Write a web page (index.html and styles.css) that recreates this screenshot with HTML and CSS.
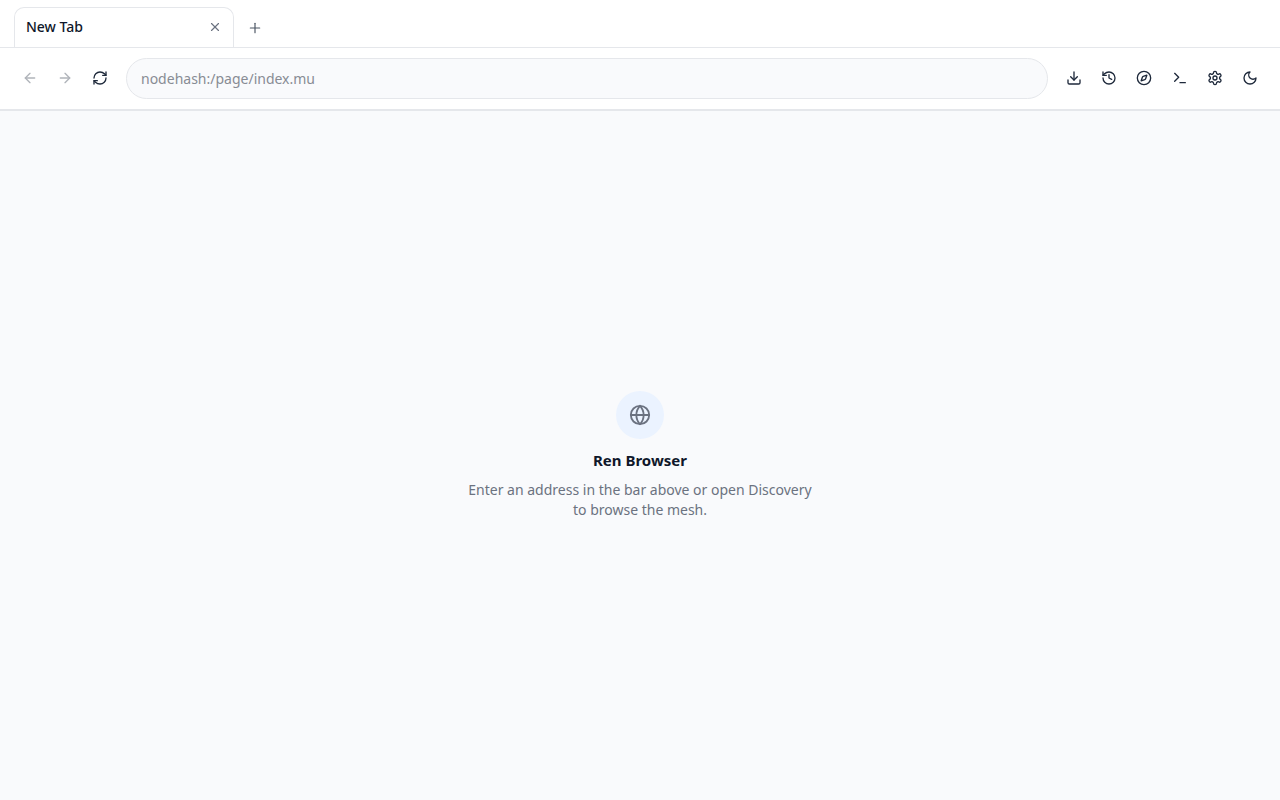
FILE: index.html
```
<!DOCTYPE html>
<html lang="en">
<head>
  <meta charset="UTF-8">
  <meta name="viewport" content="width=device-width, initial-scale=1.0">
  <title>Ren Browser</title>
  <link rel="stylesheet" href="styles.css">
</head>
<body>
  <div class="tab-bar">
    <div class="tab">
      <span class="tab-title">New Tab</span>
      <button type="button" class="tab-close" aria-label="Close tab">
        <svg viewBox="0 0 24 24"><path d="M18 6 6 18"/><path d="m6 6 12 12"/></svg>
      </button>
    </div>
    <button type="button" class="tab-new" aria-label="New tab">
      <svg viewBox="0 0 24 24"><path d="M4 12h16"/><path d="M12 4v16"/></svg>
    </button>
  </div>

  <header class="toolbar">
    <nav class="nav-buttons">
      <button type="button" class="icon-btn" aria-label="Back" disabled>
        <svg viewBox="0 0 24 24"><path d="m12 19-7-7 7-7"/><path d="M19 12H5"/></svg>
      </button>
      <button type="button" class="icon-btn" aria-label="Forward" disabled>
        <svg viewBox="0 0 24 24"><path d="M5 12h14"/><path d="m12 5 7 7-7 7"/></svg>
      </button>
      <button type="button" class="icon-btn" aria-label="Reload">
        <svg viewBox="0 0 24 24"><path d="M3 12a9 9 0 0 1 9-9 9.75 9.75 0 0 1 6.74 2.74L21 8"/><path d="M21 3v5h-5"/><path d="M21 12a9 9 0 0 1-9 9 9.75 9.75 0 0 1-6.74-2.74L3 16"/><path d="M8 16H3v5"/></svg>
      </button>
    </nav>

    <input type="text" class="address" aria-label="Address" placeholder="nodehash:/page/index.mu">

    <div class="actions">
      <button type="button" class="icon-btn" aria-label="Downloads">
        <svg viewBox="0 0 24 24"><path d="M21 15v4a2 2 0 0 1-2 2H5a2 2 0 0 1-2-2v-4"/><path d="m7 10 5 5 5-5"/><path d="M12 15V3"/></svg>
      </button>
      <button type="button" class="icon-btn" aria-label="History">
        <svg viewBox="0 0 24 24"><path d="M3 12a9 9 0 1 0 9-9 9.75 9.75 0 0 0-6.74 2.74L3 8"/><path d="M3 3v5h5"/><path d="M12 7v5l4 2"/></svg>
      </button>
      <button type="button" class="icon-btn" aria-label="Discovery">
        <svg viewBox="0 0 24 24"><circle cx="12" cy="12" r="10"/><path d="m16.24 7.76-1.804 5.411a2 2 0 0 1-1.265 1.265L7.76 16.24l1.804-5.411a2 2 0 0 1 1.265-1.265z"/></svg>
      </button>
      <button type="button" class="icon-btn" aria-label="Console">
        <svg viewBox="0 0 24 24"><path d="m4 17 6-6-6-6"/><path d="M12 19h8"/></svg>
      </button>
      <button type="button" class="icon-btn" aria-label="Settings">
        <svg viewBox="0 0 24 24"><path d="M12.22 2h-.44a2 2 0 0 0-2 2v.18a2 2 0 0 1-1 1.73l-.43.25a2 2 0 0 1-2 0l-.15-.08a2 2 0 0 0-2.73.73l-.22.38a2 2 0 0 0 .73 2.73l.15.1a2 2 0 0 1 1 1.72v.51a2 2 0 0 1-1 1.74l-.15.09a2 2 0 0 0-.73 2.73l.22.38a2 2 0 0 0 2.73.73l.15-.08a2 2 0 0 1 2 0l.43.25a2 2 0 0 1 1 1.73V20a2 2 0 0 0 2 2h.44a2 2 0 0 0 2-2v-.18a2 2 0 0 1 1-1.73l.43-.25a2 2 0 0 1 2 0l.15.08a2 2 0 0 0 2.73-.73l.22-.39a2 2 0 0 0-.73-2.73l-.15-.08a2 2 0 0 1-1-1.74v-.5a2 2 0 0 1 1-1.74l.15-.09a2 2 0 0 0 .73-2.73l-.22-.38a2 2 0 0 0-2.73-.73l-.15.08a2 2 0 0 1-2 0l-.43-.25a2 2 0 0 1-1-1.73V4a2 2 0 0 0-2-2z"/><circle cx="12" cy="12" r="3"/></svg>
      </button>
      <button type="button" class="icon-btn" aria-label="Dark mode">
        <svg viewBox="0 0 24 24"><path d="M12 3a6 6 0 0 0 9 9 9 9 0 1 1-9-9Z"/></svg>
      </button>
    </div>
  </header>

  <main class="content">
    <div class="empty">
      <div class="empty-icon">
        <svg viewBox="0 0 24 24"><circle cx="12" cy="12" r="10"/><path d="M12 2a14.5 14.5 0 0 0 0 20 14.5 14.5 0 0 0 0-20"/><path d="M2 12h20"/></svg>
      </div>
      <h1>Ren Browser</h1>
      <p>Enter an address in the bar above or open Discovery to browse the mesh.</p>
    </div>
  </main>
</body>
</html>
```
FILE: styles.css
```
* {
  box-sizing: border-box;
}
body {
  margin: 0;
  min-height: 100vh;
  display: flex;
  flex-direction: column;
  background: #f9fafc;
  color: #0f172a;
  font-family: "Noto Sans", sans-serif;
  font-size: 14px;
}
button {
  display: flex;
  align-items: center;
  justify-content: center;
  padding: 0;
  border: none;
  background: transparent;
  cursor: pointer;
}
svg {
  display: block;
  width: 16px;
  height: 16px;
  fill: none;
  stroke: currentColor;
  stroke-width: 2;
  stroke-linecap: round;
  stroke-linejoin: round;
}

/* tabs */
.tab-bar {
  display: flex;
  align-items: flex-end;
  gap: 6px;
  padding: 7px 14px 0;
  background: #fff;
  border-bottom: 1px solid #e5e7eb;
}
.tab {
  display: flex;
  align-items: center;
  justify-content: space-between;
  width: 220px;
  height: 40px;
  padding: 0 9px 1px 11px;
  border: 1px solid #e5e7eb;
  border-bottom: none;
  border-radius: 10px 10px 0 0;
}
.tab-title {
  font-weight: 500;
  line-height: 20px;
}
.tab-close {
  width: 18px;
  height: 18px;
  color: #6b7280;
}
.tab-new {
  width: 30px;
  height: 38px;
  color: #4b5563;
}
.tab-close svg,
.tab-new svg {
  width: 14px;
  height: 14px;
}

/* toolbar */
.toolbar {
  display: flex;
  align-items: center;
  gap: 10px;
  padding: 10px 14px;
  background: #fff;
  border-bottom: 2px solid #e5e7eb;
}
.nav-buttons,
.actions {
  display: flex;
  padding-bottom: 1px;
}
.nav-buttons {
  gap: 3px;
}
.actions {
  justify-content: space-between;
  min-width: 208px;
}
.icon-btn {
  width: 32px;
  height: 32px;
  border-radius: 8px;
  color: #1e293b;
}
.icon-btn:hover {
  background: #f3f4f6;
}
.icon-btn:disabled {
  opacity: 0.35;
  cursor: default;
}
.address {
  flex: 1;
  min-width: 0;
  height: 41px;
  padding: 0 14px;
  border: 1px solid #e5e7eb;
  border-radius: 21px;
  background: #f9fafc;
  color: #0f172a;
  font-family: inherit;
  font-size: 14px;
}
.address::placeholder {
  color: #888c94;
}

/* empty page */
.content {
  flex: 1;
  display: flex;
  align-items: center;
  justify-content: center;
  padding: 24px;
}
.empty {
  display: flex;
  flex-direction: column;
  align-items: center;
  max-width: 352px;
  text-align: center;
}
.empty-icon {
  display: flex;
  align-items: center;
  justify-content: center;
  width: 48px;
  height: 48px;
  margin-bottom: 12px;
  border-radius: 50%;
  background: #ebf3ff;
  color: #6b7280;
}
.empty-icon svg {
  width: 22px;
  height: 22px;
}
.empty h1 {
  margin: 0 0 11px;
  font-size: 15px;
  font-weight: 700;
  line-height: 18px;
}
.empty p {
  margin: 0;
  color: #6b7280;
  line-height: 20px;
}
```
